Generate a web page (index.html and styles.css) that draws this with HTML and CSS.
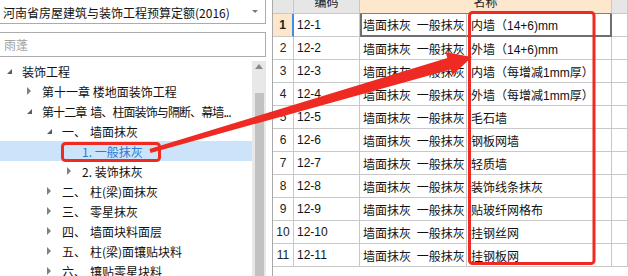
FILE: index.html
```html
<!DOCTYPE html>
<html lang="zh-CN">
<head>
    <meta charset="UTF-8">
    <meta name="viewport" content="width=device-width, initial-scale=1.0">
    <title>定额库</title>
    <link rel="stylesheet" href="styles.css">
</head>
<body>

<div class="app">

    <!-- left: quota library + chapter tree -->
    <div class="side">
        <div class="combo">
            <span>河南省房屋建筑与装饰工程预算定额(2016)</span>
            <i class="caret"></i>
        </div>
        <div class="search">雨蓬</div>

        <div class="tree-wrap">
            <ul class="tree">
                <li class="node lv0"><i class="tw open"></i><span class="label">装饰工程</span></li>
                <li class="node lv1"><i class="tw shut"></i><span class="label">第十一章 楼地面装饰工程</span></li>
                <li class="node lv1"><i class="tw open"></i><span class="label long">第十二章 墙、柱面装饰与隔断、幕墙...</span></li>
                <li class="node lv2"><i class="tw open"></i><span class="no">一、</span><span class="label">墙面抹灰</span></li>
                <li class="node lv3 selected"><i class="tw"></i><span class="label">1. 一般抹灰</span></li>
                <li class="node lv3"><i class="tw shut"></i><span class="label">2. 装饰抹灰</span></li>
                <li class="node lv2"><i class="tw shut"></i><span class="no">二、</span><span class="label">柱(梁)面抹灰</span></li>
                <li class="node lv2"><i class="tw shut"></i><span class="no">三、</span><span class="label">零星抹灰</span></li>
                <li class="node lv2"><i class="tw shut"></i><span class="no">四、</span><span class="label">墙面块料面层</span></li>
                <li class="node lv2"><i class="tw shut"></i><span class="no">五、</span><span class="label">柱(梁)面镶贴块料</span></li>
                <li class="node lv2"><i class="tw shut"></i><span class="no">六、</span><span class="label">镶贴零星块料</span></li>
            </ul>
            <div class="vscroll">
                <i class="up"></i>
                <div class="thumb"></div>
            </div>
        </div>
    </div>

    <!-- right: quota items -->
    <div class="grid">
        <div class="hd"></div>
        <div class="hd center"><span>编码</span></div>
        <div class="hd hd-name center"><span>名称</span></div>
        <div class="hd"></div>

        <div class="cell num current">1</div>
        <div class="cell code">12-1</div>
        <div class="cell desc sel">墙面抹灰 一般抹灰</div>
        <div class="cell name sel">内墙（14+6)mm</div>
        <div class="cell"></div>

        <div class="cell num">2</div>
        <div class="cell code">12-2</div>
        <div class="cell desc">墙面抹灰 一般抹灰</div>
        <div class="cell name">外墙（14+6)mm</div>
        <div class="cell"></div>

        <div class="cell num">3</div>
        <div class="cell code">12-3</div>
        <div class="cell desc">墙面抹灰 一般抹灰</div>
        <div class="cell name">内墙（每增减1mm厚）</div>
        <div class="cell"></div>

        <div class="cell num">4</div>
        <div class="cell code">12-4</div>
        <div class="cell desc">墙面抹灰 一般抹灰</div>
        <div class="cell name">外墙（每增减1mm厚）</div>
        <div class="cell"></div>

        <div class="cell num">5</div>
        <div class="cell code">12-5</div>
        <div class="cell desc">墙面抹灰 一般抹灰</div>
        <div class="cell name">毛石墙</div>
        <div class="cell"></div>

        <div class="cell num">6</div>
        <div class="cell code">12-6</div>
        <div class="cell desc">墙面抹灰 一般抹灰</div>
        <div class="cell name">钢板网墙</div>
        <div class="cell"></div>

        <div class="cell num">7</div>
        <div class="cell code">12-7</div>
        <div class="cell desc">墙面抹灰 一般抹灰</div>
        <div class="cell name">轻质墙</div>
        <div class="cell"></div>

        <div class="cell num">8</div>
        <div class="cell code">12-8</div>
        <div class="cell desc">墙面抹灰 一般抹灰</div>
        <div class="cell name">装饰线条抹灰</div>
        <div class="cell"></div>

        <div class="cell num">9</div>
        <div class="cell code">12-9</div>
        <div class="cell desc">墙面抹灰 一般抹灰</div>
        <div class="cell name">贴玻纤网格布</div>
        <div class="cell"></div>

        <div class="cell num">10</div>
        <div class="cell code">12-10</div>
        <div class="cell desc">墙面抹灰 一般抹灰</div>
        <div class="cell name">挂钢丝网</div>
        <div class="cell"></div>

        <div class="cell num">11</div>
        <div class="cell code">12-11</div>
        <div class="cell desc">墙面抹灰 一般抹灰</div>
        <div class="cell name">挂钢板网</div>
        <div class="cell"></div>
    </div>

    <!-- red annotation drawn over the screenshot -->
    <svg class="marks" width="628" height="276" viewBox="0 0 628 276">
        <rect x="62.5" y="143.5" width="97" height="17" rx="3" />
        <rect x="469.5" y="12.5" width="124.5" height="251" rx="3" />
        <polygon class="arrow" points="149.4,149.1 447.3,58 445.6,52.2 472,57 452.3,75.2 450.6,69.5 150.6,152.9" />
    </svg>

</div>

</body>
</html>
```

FILE: styles.css
```css
body {
    margin: 0;
    width: 628px;
    height: 276px;
    overflow: hidden;
    background-color: #fff;
    font-family: "Noto Sans CJK SC", sans-serif;
    font-size: 12px;
    color: #111;
}

.app {
    position: relative;
    display: flex;
    height: 276px;
    overflow: hidden;
}

/* ---------- left side ---------- */

.side {
    width: 266px;
    flex: none;
    display: flex;
    flex-direction: column;
}

.combo {
    box-sizing: border-box;
    height: 25px;
    margin: -1px 0 0 -1px;
    padding: 2px 7px 0 3px;
    border: 1px solid #ababab;
    display: flex;
    align-items: center;
    justify-content: space-between;
    white-space: nowrap;
}

.caret {
    border-top: 3px solid #7a7a7a;
    border-left: 3px solid transparent;
    border-right: 3px solid transparent;
    margin-top: -3px;
}

.search {
    box-sizing: border-box;
    height: 25px;
    margin: 8px 0 0 -1px;
    padding-left: 4px;
    border: 1px solid #ababab;
    display: flex;
    align-items: center;
    color: #a3a3a3;
}

.tree-wrap {
    flex: 1;
    margin-top: 4px;
    display: flex;
    overflow: hidden;
}

.tree {
    width: 252px;
    flex: none;
    list-style: none;
    margin: 0;
    padding: 0;
}

.node {
    height: 20px;
    display: flex;
    align-items: center;
    white-space: nowrap;
}

.node.lv1 { padding-left: 20px; }
.node.lv2 { padding-left: 40px; }
.node.lv3 { padding-left: 60px; }

.node.selected {
    background-color: #cce4f9;
    color: #2f78d4;
}

.tw {
    width: 22px;
    height: 20px;
    flex: none;
    display: flex;
    align-items: center;
}

.tw.open::before {
    content: "";
    margin: 1px 0 0 7px;
    border-right: 5px solid #5c5c5c;
    border-top: 5px solid transparent;
}

.tw.shut::before {
    content: "";
    margin-left: 7px;
    border-left: 4px solid #808080;
    border-top: 4px solid transparent;
    border-bottom: 4px solid transparent;
}

.no {
    width: 28px;
    flex: none;
}

.label {
    overflow: hidden;
}

.label.long {
    letter-spacing: -0.9px;
    word-spacing: 2px;
}

.vscroll {
    width: 14px;
    flex: none;
    background-color: #e8e8e8;
    display: flex;
    flex-direction: column;
    align-items: center;
}

.vscroll .up {
    margin-top: 3px;
    border-bottom: 5px solid #8a8a8a;
    border-left: 4px solid transparent;
    border-right: 4px solid transparent;
}

.vscroll .thumb {
    flex: 1;
    width: 9px;
    margin-top: 24px;
    background-color: #c2c2c2;
}

/* ---------- right grid ---------- */

.grid {
    flex: 1;
    margin-left: 6px;
    border-left: 1px solid #a9a9a9;
    display: grid;
    grid-template-columns: 21px 66px 107px 145px 1fr;
    grid-template-rows: 14px;
    grid-auto-rows: 23px;
    align-content: start;
    font-family: "Liberation Sans", "Noto Sans CJK SC", sans-serif;
}

.hd,
.cell {
    box-sizing: border-box;
    border-right: 1px solid #c8c8c8;
    border-bottom: 1px solid #c8c8c8;
    display: flex;
    align-items: center;
    white-space: nowrap;
    overflow: hidden;
}

.hd {
    background-color: #e6e6e6;
}

.hd.center {
    justify-content: center;
}

.hd span {
    line-height: 14px;
    margin-top: -8px;
    color: #222;
}

.hd-name {
    grid-column: span 2;
    background-color: #fde8cd;
    border-bottom-color: #3d8ee6;
}

.cell.num {
    justify-content: center;
    color: #222;
}

.cell.num.current {
    background-color: #fde6c9;
    border-right: 2px solid #3d8ee6;
    font-weight: bold;
}

.cell.code {
    padding-left: 3px;
}

.cell.desc {
    padding-left: 3px;
    word-spacing: 2.5px;
}

.cell.name {
    padding-left: 4px;
}

.cell.desc.sel {
    border-left: 2px solid #6f6f6f;
    border-bottom: 2px solid #6f6f6f;
    padding-left: 1px;
}

.cell.name.sel {
    border-right: 2px solid #6f6f6f;
    border-bottom: 2px solid #6f6f6f;
}

/* ---------- annotation ---------- */

.marks {
    position: absolute;
    left: 0;
    top: 0;
    pointer-events: none;
}

.marks rect {
    fill: none;
    stroke: #ee2a22;
    stroke-width: 3;
}

.marks .arrow {
    fill: #ee2a22;
}
```
